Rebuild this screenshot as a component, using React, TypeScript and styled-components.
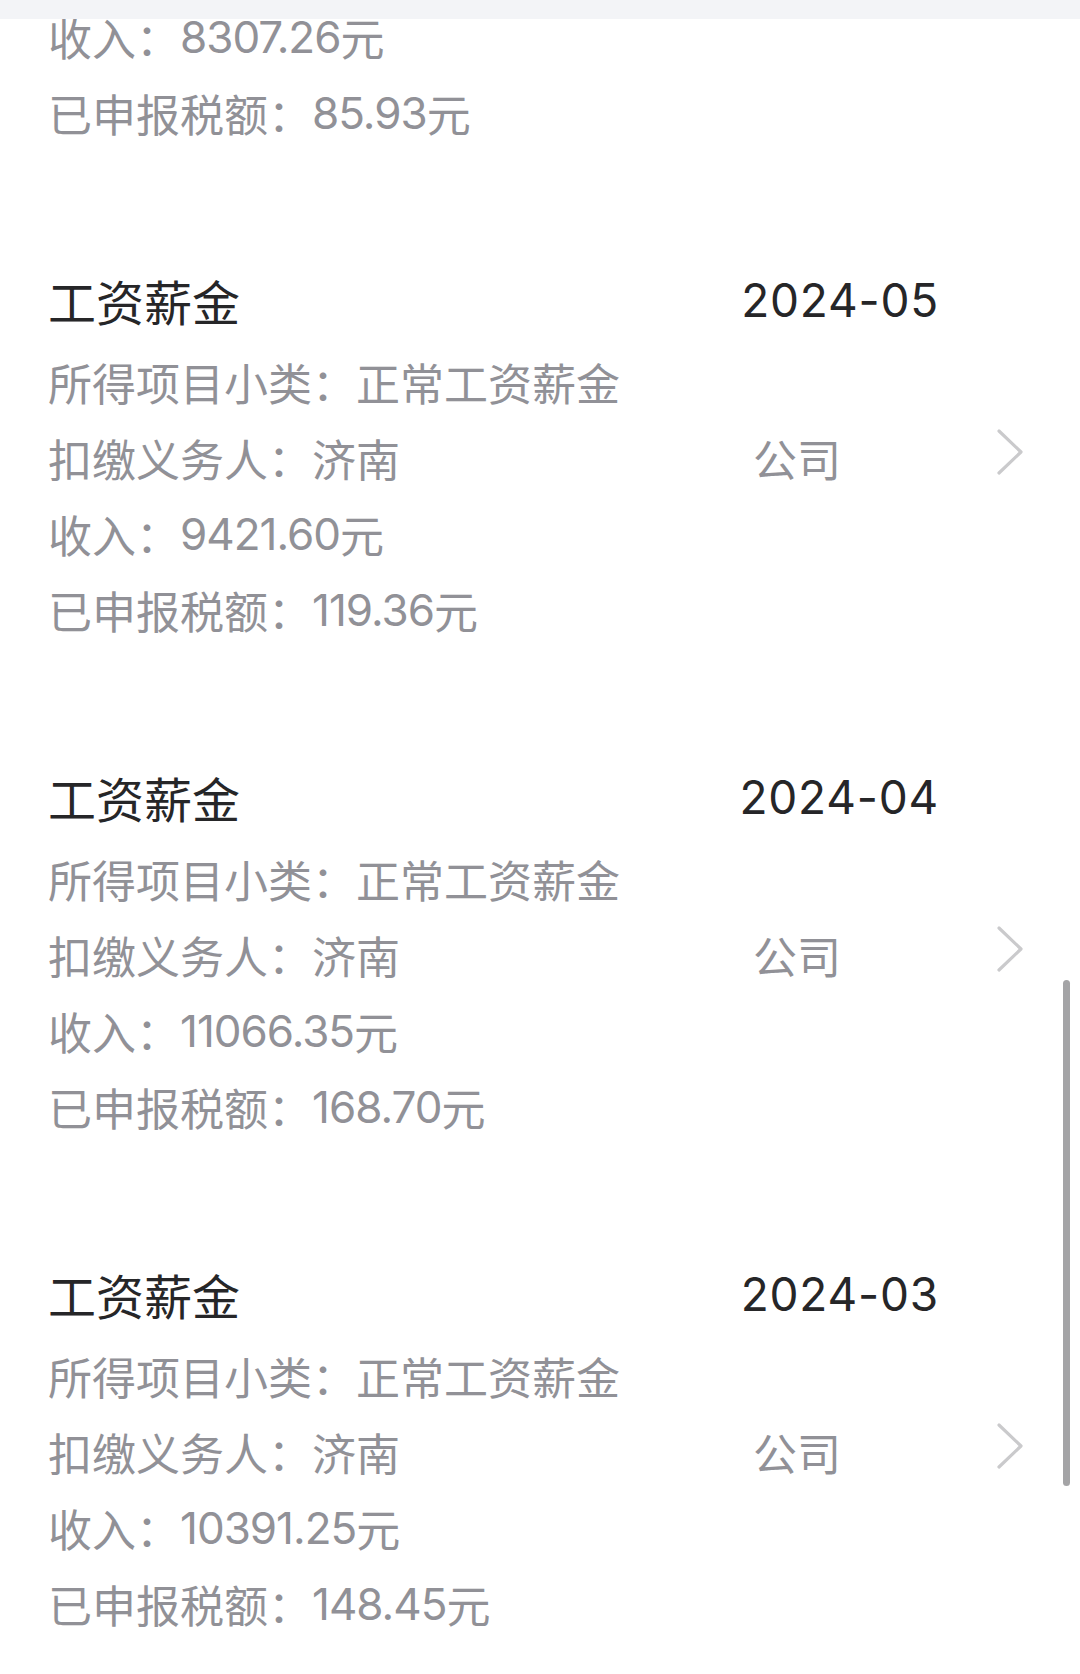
import styled, { createGlobalStyle } from "styled-components";

const GlobalStyle = createGlobalStyle`
  html, body {
    margin: 0;
    padding: 0;
    background: #ffffff;
  }
  body {
    font-family: "Inter", "Noto Sans CJK SC", sans-serif;
  }
`;

const Screen = styled.div`
  position: relative;
  width: 1080px;
  height: 1674px;
  overflow: hidden;
  background: #ffffff;
`;

const TopBar = styled.div`
  position: absolute;
  top: 0;
  left: 0;
  right: 0;
  height: 19px;
  background: #f3f4f7;
  z-index: 2;
`;

const List = styled.div`
  display: flex;
  flex-direction: column;
  gap: 105px;
  margin-top: -1px;
`;

const Card = styled.div`
  display: flex;
  flex-direction: row;
  align-items: center;
  padding: 0 0 0 48px;
`;

const Body = styled.div`
  display: flex;
  flex-direction: column;
  width: 891px;
`;

const TitleRow = styled.div`
  display: flex;
  justify-content: space-between;
  align-items: center;
  height: 88px;
`;

const Title = styled.span`
  font-family: "Noto Sans CJK SC", sans-serif;
  font-size: 48px;
  color: #262628;
`;

const DateText = styled.span`
  font-family: "Inter", "Noto Sans CJK SC", sans-serif;
  font-size: 46px;
  color: #262628;
  letter-spacing: 0.8px;
`;

const Line = styled.div`
  display: flex;
  align-items: center;
  height: 76px;
  font-family: "Noto Sans CJK SC", sans-serif;
  font-size: 44px;
  color: #919197;
  white-space: nowrap;
`;

const Num = styled.span`
  font-family: "Inter", "Noto Sans CJK SC", sans-serif;
  letter-spacing: -1px;
`;

const Hidden = styled.span<{ $w: number }>`
  display: inline-block;
  width: ${(p) => p.$w}px;
`;

const Chevron = styled.svg`
  width: 28px;
  height: 48px;
  margin-left: 57px;
  flex-shrink: 0;
`;

const ScrollThumb = styled.div`
  position: absolute;
  left: 1063px;
  top: 980px;
  width: 7px;
  height: 506px;
  border-radius: 4px;
  background: #a4a4a6;
  z-index: 3;
`;

type Record = {
  month: string;
  income: string;
  tax: string;
};

const first = { income: "8307.26", tax: "85.93" };

const records: Record[] = [
  { month: "2024-05", income: "9421.60", tax: "119.36" },
  { month: "2024-04", income: "11066.35", tax: "168.70" },
  { month: "2024-03", income: "10391.25", tax: "148.45" },
];

function Amounts({ income, tax }: { income: string; tax: string }) {
  return (
    <>
      <Line>
        收入：<Num>{income}</Num>元
      </Line>
      <Line>
        已申报税额：<Num>{tax}</Num>元
      </Line>
    </>
  );
}

export default function App() {
  return (
    <Screen>
      <GlobalStyle />
      <TopBar />
      <List>
        {/* previous record, scrolled mostly out of view */}
        <Card>
          <Body>
            <Amounts income={first.income} tax={first.tax} />
          </Body>
        </Card>
        {records.map((r) => (
          <Card key={r.month}>
            <Body>
              <TitleRow>
                <Title>工资薪金</Title>
                <DateText>{r.month}</DateText>
              </TitleRow>
              <Line>所得项目小类：正常工资薪金</Line>
              <Line>
                扣缴义务人：济南
                <Hidden $w={353} />
                公司
              </Line>
              <Amounts income={r.income} tax={r.tax} />
            </Body>
            <Chevron viewBox="0 0 28 48">
              <path
                d="M3 3 L25 24 L3 45"
                fill="none"
                stroke="#cacacc"
                strokeWidth={3.2}
                strokeLinecap="round"
                strokeLinejoin="round"
              />
            </Chevron>
          </Card>
        ))}
      </List>
      <ScrollThumb />
    </Screen>
  );
}
